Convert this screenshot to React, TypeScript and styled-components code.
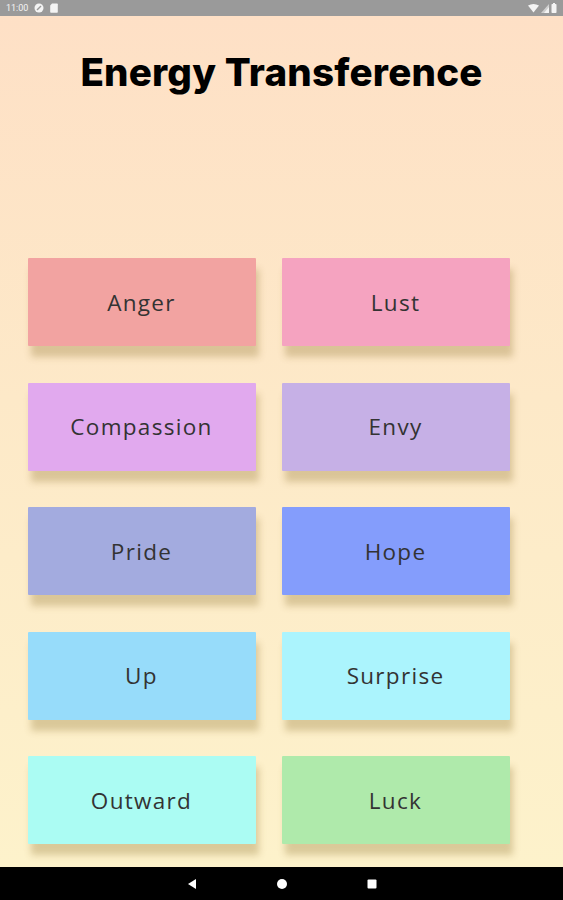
import React from 'react'
import styled, { createGlobalStyle } from 'styled-components'

const GlobalStyle = createGlobalStyle`
  html, body {
    margin: 0;
    padding: 0;
  }
  body {
    font-family: "Open Sans", "Liberation Sans", sans-serif;
  }
`

const Screen = styled.div`
  display: flex;
  flex-direction: column;
  width: 563px;
  height: 900px;
  overflow: hidden;
`

const StatusBar = styled.div`
  display: flex;
  align-items: center;
  justify-content: space-between;
  height: 16px;
  padding: 0 6px 0 6px;
  background: #9a9a9a;
  color: #f4f4f4;
  font-family: "Roboto", sans-serif;
  font-size: 9px;
  flex-shrink: 0;
`

const StatusGroup = styled.div<{ $gap?: number }>`
  display: flex;
  align-items: center;
  gap: ${p => p.$gap ?? 6}px;
`

const Content = styled.main`
  flex: 1;
  display: flex;
  flex-direction: column;
  align-items: center;
  background: linear-gradient(to bottom, #fee0c6 0%, #fde9c8 45%, #fdf2cb 100%);
`

const Title = styled.h1`
  margin: 30px 0 0;
  font-family: "Inter", sans-serif;
  font-weight: 800;
  font-size: 38.5px;
  line-height: 52px;
  color: #000;
  letter-spacing: 0.2px;
`

const Grid = styled.div`
  display: grid;
  grid-template-columns: 228px 228px;
  column-gap: 26px;
  row-gap: 36.5px;
  margin-top: 160px;
  margin-left: -26px;
`

const Card = styled.button<{ $bg: string }>`
  display: flex;
  align-items: center;
  justify-content: center;
  height: 88px;
  border: none;
  border-radius: 1px;
  background: ${p => p.$bg};
  box-shadow: 3px 11px 7px rgba(140, 110, 40, 0.3);
  font-family: "Open Sans", sans-serif;
  font-size: 22.5px;
  letter-spacing: 1.3px;
  color: #333;
  padding: 0;
`

const NavBar = styled.nav`
  display: flex;
  align-items: center;
  justify-content: center;
  gap: 78px;
  height: 33px;
  background: #000;
  flex-shrink: 0;
`

const cards = [
  { label: 'Anger', bg: '#f2a3a1' },
  { label: 'Lust', bg: '#f5a3c0' },
  { label: 'Compassion', bg: '#e1a9ee' },
  { label: 'Envy', bg: '#c6b0e6' },
  { label: 'Pride', bg: '#a3abdf' },
  { label: 'Hope', bg: '#849dfc' },
  { label: 'Up', bg: '#97dcfa' },
  { label: 'Surprise', bg: '#abf4fd' },
  { label: 'Outward', bg: '#abfcf3' },
  { label: 'Luck', bg: '#afeaab' },
]

export default function App() {
  return (
    <Screen>
      <GlobalStyle />
      <StatusBar>
        <StatusGroup>
          <span>11:00</span>
          <svg width="10" height="10" viewBox="0 0 10 10">
            <circle cx="5" cy="5" r="4.5" fill="#f4f4f4" />
            <path d="M3 7 L7 3" stroke="#9a9a9a" strokeWidth="1.4" />
          </svg>
          <svg width="8" height="10" viewBox="0 0 8 10">
            <path d="M2 0.5 H7 a0.8 0.8 0 0 1 0.8 0.8 V9 a0.8 0.8 0 0 1 -0.8 0.8 H1 a0.8 0.8 0 0 1 -0.8 -0.8 V2.5 Z" fill="#f4f4f4" />
          </svg>
        </StatusGroup>
        <StatusGroup $gap={2}>
          <svg width="11" height="9" viewBox="0 0 11 9">
            <path d="M0 1.5 Q5.5 -1.5 11 1.5 L5.5 8.5 Z" fill="#f4f4f4" />
          </svg>
          <svg width="8" height="9" viewBox="0 0 8 9">
            <path d="M8 0 V9 H0 Z" fill="#f4f4f4" opacity="0.6" />
            <path d="M8 3 V9 H3 Z" fill="#f4f4f4" />
          </svg>
          <svg width="6" height="10" viewBox="0 0 6 10">
            <rect x="0.5" y="1" width="5" height="9" rx="0.8" fill="#f4f4f4" />
            <rect x="2" y="0" width="2" height="1.2" fill="#f4f4f4" />
          </svg>
        </StatusGroup>
      </StatusBar>
      <Content>
        <Title>Energy Transference</Title>
        <Grid>
          {cards.map(c => (
            <Card key={c.label} $bg={c.bg}>{c.label}</Card>
          ))}
        </Grid>
      </Content>
      <NavBar>
        <svg width="12" height="12" viewBox="0 0 12 12">
          <path d="M10 1 V11 L2 6 Z" fill="#fff" />
        </svg>
        <svg width="12" height="12" viewBox="0 0 12 12">
          <circle cx="6" cy="6" r="5" fill="#fff" />
        </svg>
        <svg width="12" height="12" viewBox="0 0 12 12">
          <rect x="1.5" y="1.5" width="9" height="9" rx="1" fill="#fff" />
        </svg>
      </NavBar>
    </Screen>
  )
}
